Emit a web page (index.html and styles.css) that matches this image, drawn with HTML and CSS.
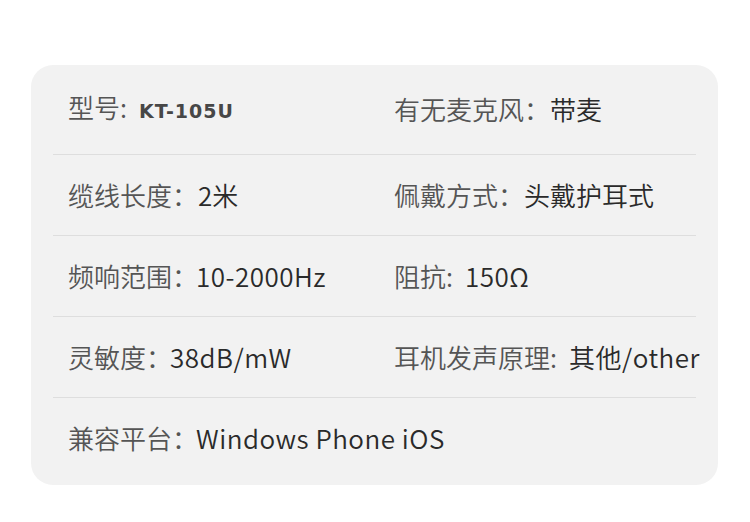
FILE: index.html
```html
<!DOCTYPE html>
<html lang="zh-CN">
<head>
<meta charset="utf-8">
<link rel="stylesheet" href="styles.css">
</head>
<body>
<div class="card">
  <div class="row first">
    <div class="cell"><span class="label">型号:</span><span class="model">KT-105U</span></div>
    <div class="cell"><span class="label">有无麦克风：</span><span class="value">带麦</span></div>
  </div>
  <div class="row">
    <div class="cell"><span class="label">缆线长度：</span><span class="value">2米</span></div>
    <div class="cell"><span class="label">佩戴方式：</span><span class="value">头戴护耳式</span></div>
  </div>
  <div class="row">
    <div class="cell"><span class="label">频响范围：</span><span class="value latin">10-2000Hz</span></div>
    <div class="cell"><span class="label half">阻抗:</span><span class="value latin">150Ω</span></div>
  </div>
  <div class="row">
    <div class="cell"><span class="label">灵敏度：</span><span class="value latin">38dB/mW</span></div>
    <div class="cell"><span class="label half">耳机发声原理:</span><span class="value latin">其他/other</span></div>
  </div>
  <div class="row last">
    <div class="cell"><span class="label">兼容平台：</span><span class="value latin">Windows Phone iOS</span></div>
  </div>
</div>
</body>
</html>
```

FILE: styles.css
```css
html, body {
  margin: 0;
  padding: 0;
  background: #ffffff;
}
body {
  padding: 65px 32px 0 31px;
  font-family: "Noto Sans CJK SC", "Noto Sans", sans-serif;
}
.card {
  width: 687px;
  height: 420px;
  box-sizing: border-box;
  background: #f2f2f2;
  border-radius: 22px;
  padding: 9px 22px 7px 22px;
}
.row {
  height: 80px;
  border-bottom: 1px solid #dedede;
  display: grid;
  grid-template-columns: 326px 1fr;
  align-items: center;
  padding-left: 15px;
}
.row.first {
  height: 70px;
  padding-bottom: 10px;
}
.row.last {
  border-bottom: none;
}
.cell {
  display: flex;
  align-items: baseline;
  white-space: nowrap;
  font-size: 26px;
  line-height: 30px;
  font-weight: 350;
}
.label {
  color: #555555;
}
.label.half {
  margin-right: 14px;
}
.value {
  color: #2a2a2a;
}
.value.latin {
  letter-spacing: 0.5px;
  margin-left: -2px;
}
.model {
  font-family: "DejaVu Sans", sans-serif;
  font-weight: bold;
  font-size: 19px;
  letter-spacing: 1px;
  color: #474747;
  margin-left: 12px;
}
```
